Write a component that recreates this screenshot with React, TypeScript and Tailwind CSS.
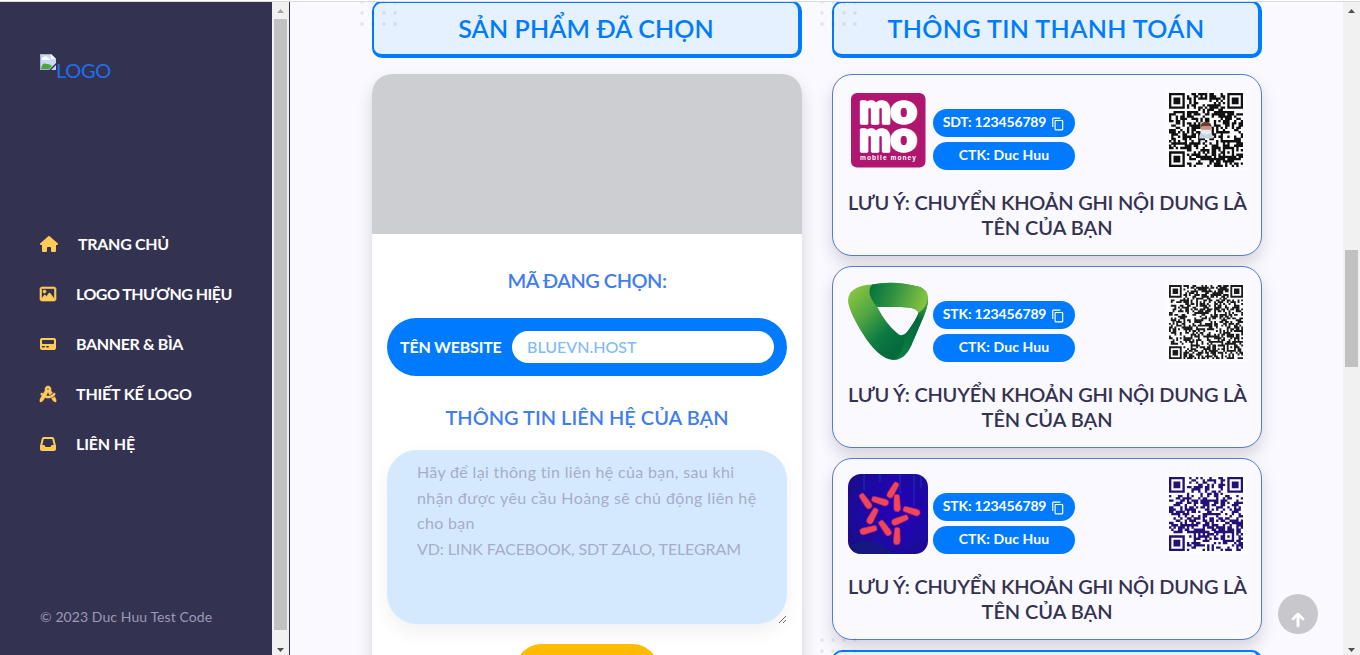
import React from "react";
import { FaHouse, FaRegImage, FaPager, FaCompassDrafting, FaInbox, FaArrowUp } from "react-icons/fa6";
import { MdContentCopy } from "react-icons/md";

function Scrollbar({ thumb, atTop }: { thumb: React.ReactNode; atTop?: boolean }) {
  return (
    <div className="flex h-full w-[17px] shrink-0 flex-col items-center bg-[#f1f1f1]">
      <div className="flex h-[17px] shrink-0 items-center">
        <svg width="7" height="4" viewBox="0 0 7 4" className={atTop ? "fill-[#a3a3a3]" : "fill-[#505050]"}>
          <path d="M3.5 0 7 4H0z" />
        </svg>
      </div>
      <div className="min-h-0 w-full flex-1">{thumb}</div>
      <div className="flex h-[9px] shrink-0 items-start pt-[2px]">
        <svg width="7" height="4" viewBox="0 0 7 4" className="fill-[#505050]">
          <path d="M0 0h7L3.5 4z" />
        </svg>
      </div>
    </div>
  );
}

function Qr({ n, seed, color, face }: { n: number; seed: number; color: string; face?: boolean }) {
  let s = seed;
  const rand = () => {
    s = (s * 1103515245 + 12345) % 2147483648;
    return s / 2147483648;
  };
  const finder = (x: number, y: number) => {
    const d = Math.max(Math.abs(x - 3), Math.abs(y - 3));
    return d === 3 || d <= 1;
  };
  let d = "";
  for (let y = 0; y < n; y++) {
    for (let x = 0; x < n; x++) {
      let on = rand() > 0.47;
      if (x < 8 && y < 8) on = x < 7 && y < 7 && finder(x, y);
      else if (x > n - 9 && y < 8) on = x > n - 8 && y < 7 && finder(x - n + 7, y);
      else if (x < 8 && y > n - 9) on = x < 7 && y > n - 8 && finder(x, y - n + 7);
      else {
        const a = Math.max(Math.abs(x - n + 7), Math.abs(y - n + 7));
        if (a <= 2) on = a !== 1;
        if (face && Math.abs(x - 16) < 3 && Math.abs(y - 16) < 4) on = false;
      }
      if (on) d += `M${x} ${y}h1.04v1.04h-1.04z`;
    }
  }
  return (
    <div className="size-20 shrink-0 bg-[#fdfdff] p-[3px]">
      <svg width="74" height="74" viewBox={`0 0 ${n} ${n}`}>
        <path d={d} fill={color} />
        {face && (
          <g>
            <path d="M13.500 19.500q0-2 3-2t3 2v.8h-6z" fill="#c4d5e4" />
            <circle cx="16.5" cy="15.8" r="2.2" fill="#c98f80" />
            <path d="M14 15.600q0-2.800 2.500-2.800t2.600 2.800l-.8-.9h-3.400z" fill="#6b3b34" />
            <path d="M14.600 16.400h3.800v1.500l-1.900.8-1.900-.8z" fill="#e2eaf2" />
          </g>
        )}
      </svg>
    </div>
  );
}

function MomoLogo() {
  return (
    <svg width="80" height="80" viewBox="0 0 80 80" className="shrink-0 overflow-visible">
      <rect x="3" y="3" width="74.5" height="74.5" rx="6" fill="#ae1670" />
      <g
        fill="#fff"
        stroke="#fff"
        strokeWidth="3.4"
        strokeLinejoin="round"
        fontFamily="Lato, sans-serif"
        fontWeight="900"
        fontSize="39"
      >
        <text x="11.5" y="32.500" textLength="31" lengthAdjust="spacingAndGlyphs">m</text>
        <text x="43" y="32.500" textLength="25.500" lengthAdjust="spacingAndGlyphs">o</text>
        <text x="11.5" y="60.500" textLength="31" lengthAdjust="spacingAndGlyphs">m</text>
        <text x="43" y="60.500" textLength="25.500" lengthAdjust="spacingAndGlyphs">o</text>
      </g>
      <text x="12" y="70" textLength="56" fill="#fff" fontFamily="Liberation Sans, sans-serif" fontWeight="700" fontSize="6.6">
        mobile money
      </text>
    </svg>
  );
}

function TriangleLogo() {
  return (
    <svg width="80" height="80" viewBox="0 0 80 80" className="shrink-0">
      <defs>
        <linearGradient id="leaf" gradientUnits="userSpaceOnUse" x1="2" y1="14" x2="52" y2="62">
          <stop offset="0" stopColor="#84c341" />
          <stop offset="0.35" stopColor="#4fa643" />
          <stop offset="0.72" stopColor="#0d7a42" />
          <stop offset="1" stopColor="#046b3c" />
        </linearGradient>
        <linearGradient id="band" gradientUnits="userSpaceOnUse" x1="22" y1="6" x2="76" y2="24">
          <stop offset="0" stopColor="#07733e" />
          <stop offset="0.4" stopColor="#2c8f41" />
          <stop offset="1" stopColor="#86c440" />
        </linearGradient>
        <linearGradient id="side" gradientUnits="userSpaceOnUse" x1="78" y1="22" x2="48" y2="76">
          <stop offset="0" stopColor="#3f9c43" />
          <stop offset="0.3" stopColor="#05683a" />
          <stop offset="1" stopColor="#0b8245" />
        </linearGradient>
      </defs>
      <path
        fillRule="evenodd"
        d="M24 2.500Q0 4 0 19Q1 29 13 49Q30 77 45 78Q56 78 63 64L78 28Q81 20 79 13Q76 5 70 4.500Q46-2 24 2.500ZM29.300 25H53Q69 25 70.500 31Q68 38 59 50Q54 56 49 51Q38 42 29.300 25Z"
        fill="url(#leaf)"
      />
      <path d="M70.500 31Q76 26 79.500 16Q81 21 76 34L63 64Q58 76 47 78Q56 70 57 53Q66 42 70.500 31Z" fill="url(#side)" />
      <path d="M24 2.500Q46-2 70 4.500Q80 7 80 16Q79 25 70.500 31Q69 25 53 25H29.300Q17 11 24 2.500Z" fill="url(#band)" />
    </svg>
  );
}

const strokes = [
  [45, 16, 120], [17.5, 27, 55], [32, 27, 17], [49, 29, 88], [63.5, 37, 17],
  [24.5, 42, 118], [52, 46, 158], [20.5, 56, 165], [37, 54, 55], [49, 62, 92],
];

function StarLogo() {
  return (
    <svg width="80" height="80" viewBox="0 0 80 80" className="shrink-0 rounded-[13px]">
      <defs>
        <radialGradient id="night" cx="0.6" cy="0.45" r="0.75">
          <stop offset="0" stopColor="#2600b8" />
          <stop offset="0.6" stopColor="#1d0aa4" />
          <stop offset="1" stopColor="#180d80" />
        </radialGradient>
      </defs>
      <rect width="80" height="80" fill="url(#night)" />
      <path d="M16 0v16M32 0v8M52 0v20M66 0v32M73 0v14" stroke="#294dc0" strokeWidth="1" opacity="0.6" />
      <path d="M0 73Q22 57 46 80H0Z" fill="#142078" opacity="0.55" />
      {strokes.map(([x, y, r]) => (
        <path
          key={`${x}-${y}`}
          d="M-8.500-1.500Q-8.500-2.600-6-2.800L5-3.400Q8.800-3.400 8.800 0T5 3.400L-6 2.800Q-8.500 2.600-8.500 1.500Z"
          transform={`translate(${x} ${y}) rotate(${r})`}
          fill="#f04758"
          stroke="#b91d68"
          strokeWidth="0.6"
        />
      ))}
    </svg>
  );
}

function Dots({ className }: { className: string }) {
  return (
    <svg width="40" height="28" viewBox="0 0 40 28" className={`pointer-events-none absolute ${className}`}>
      {[0, 1, 2].map((r) =>
        [0, 1, 2, 3].map((c) => (
          <circle key={`${r}-${c}`} cx={2 + c * 11} cy={2 + r * 11} r="1.8" fill="#343251" opacity="0.1" />
        ))
      )}
    </svg>
  );
}

function Heading({ children }: { children: React.ReactNode }) {
  return (
    <h2 className="flex h-[57px] shrink-0 items-center justify-center rounded-[10px] border-2 border-r-4 border-b-4 border-[#007bff] bg-[#e5f1fe] text-[25px] font-semibold text-[#007bff]">
      {children}
    </h2>
  );
}

function PayCard({ logo, label, qr }: { logo: React.ReactNode; label: string; qr: React.ReactNode }) {
  return (
    <section className="flex h-[182px] shrink-0 flex-col rounded-[20px] border border-[#5478d4] bg-[#faf9ff] p-[15px] shadow-[0_8px_16px_rgba(0,0,0,0.15)]">
      <div className="flex h-20">
        {logo}
        <div className="ml-[5px] flex w-[142px] flex-col gap-[5px] pt-[19px] text-sm font-bold text-white">
          <div className="flex h-7 shrink-0 items-center justify-center gap-[5px] rounded-full bg-[#007bff] pb-[2px]">
            <span className="tracking-[-0.15px] whitespace-nowrap">{label}: 123456789</span>
            <MdContentCopy className="mt-[3px] size-[14px]" />
          </div>
          <div className="flex h-7 shrink-0 items-center justify-center rounded-full bg-[#007bff] pb-[2px] tracking-[0.1px]">
            CTK: Duc Huu
          </div>
        </div>
        <div className="ml-auto">{qr}</div>
      </div>
      <p className="mt-5 text-center text-[20px] leading-[25px] font-semibold whitespace-nowrap text-[#343251]">
        <span className="tracking-[-0.22px]">LƯU Ý: CHUYỂN KHOẢN GHI NỘI DUNG LÀ</span>
        <br />
        <span className="tracking-[-0.05px]">TÊN CỦA BẠN</span>
      </p>
    </section>
  );
}

const nav = [
  { icon: <FaHouse className="h-4 w-[18px]" />, text: "TRANG CHỦ", track: "tracking-[-0.3px]" },
  { icon: <FaRegImage className="size-4 overflow-visible stroke-current [stroke-width:20]" />, text: "LOGO THƯƠNG HIỆU", track: "tracking-[-0.52px]" },
  { icon: <FaPager className="size-4" />, text: "BANNER & BÌA", track: "tracking-[-0.36px]" },
  { icon: <FaCompassDrafting className="size-4 overflow-visible stroke-current [stroke-width:20]" />, text: "THIẾT KẾ LOGO", track: "tracking-[-0.2px]" },
  { icon: <FaInbox className="size-4" />, text: "LIÊN HỆ", track: "tracking-[-0.15px]" },
];

function Sidebar() {
  return (
    <aside className="flex w-[272px] shrink-0 flex-col bg-[#343251] px-10">
      <a className="flex h-[167px] items-start pt-[52px] text-[20px] text-[#1e6ff0]">
        <svg width="16" height="16" viewBox="0 0 16 16" className="shrink-0">
          <path d="M0 0h11l5 5v4L9 16H0z" fill="#c8d8f6" />
          <path d="M11 0v5h5z" fill="#f6f8ff" />
          <path d="M2 5q0-2 2-2 2-2 4 1 2 0 2 2H2z" fill="#fff" />
          <path d="M1 15q1-7 6-5 3 0 5 2l-3 3z" fill="#4da63b" />
          <path d="M16 11v5h-5z" fill="#c7d2ea" />
          <path d="M.5 0v15.500M0 .5h11M0 15.500h9" stroke="#a7b3cb" strokeWidth="1" fill="none" />
        </svg>
        <span className="mt-px tracking-[-0.3px]">LOGO</span>
      </a>
      <nav className="mt-[50px] flex flex-col">
        {nav.map((n) => (
          <a key={n.text} className="flex h-[50px] items-center gap-5 text-base font-bold whitespace-nowrap text-white">
            <span className="shrink-0 text-[#ffcc57]">{n.icon}</span>
            <span className={n.track}>{n.text}</span>
          </a>
        ))}
      </nav>
      <p className="mt-auto mb-[28px] text-sm leading-5 text-[#9b9ab5]">
        <span className="tracking-[0.08px]">© 2023 Duc Huu Test Code</span>
      </p>
    </aside>
  );
}

export default function App() {
  return (
    <div className="flex h-[655px] w-[1360px] flex-col overflow-hidden bg-white pt-px font-[Lato,'Noto_Sans',sans-serif]">
      <div className="h-px shrink-0 bg-[#d9d9df]" />
      <div className="flex min-h-0 flex-1">
        <Sidebar />
        <Scrollbar atTop thumb={<div className="mx-auto h-[611px] w-[13px] bg-[#c1c1c1]" />} />
        <div className="w-px shrink-0 bg-[#343251]" />
        <main className="relative flex min-w-0 flex-1 gap-[30px] overflow-hidden bg-[#faf9ff] pl-[82px]">
          <div className="relative -mt-px flex w-[430px] shrink-0 flex-col gap-4">
            <Heading>
              <span className="tracking-[0.13px]">SẢN PHẨM ĐÃ CHỌN</span>
            </Heading>
            <Dots className="top-[-1px] left-[-12px]" />
            <section className="flex h-[640px] shrink-0 flex-col rounded-[20px] bg-white shadow-[0_8px_16px_rgba(0,0,0,0.15)]">
              <div className="h-[160px] shrink-0 rounded-t-[20px] bg-[#cdced2]" />
              <div className="flex flex-col items-center px-[15px]">
                <h3 className="mt-[33px] h-[26px] text-[20px] leading-[26px] font-semibold whitespace-nowrap text-[#3f7df0]">
                  <span className="tracking-[-0.5px]">MÃ ĐANG CHỌN:</span>
                </h3>
                <div className="mt-[25px] flex h-[58px] w-full items-center rounded-full bg-[#007bff] pr-[13px] pl-[13px]">
                  <label className="w-[112px] shrink-0 text-base font-bold whitespace-nowrap text-white">
                    <span className="tracking-[-0.2px]">TÊN WEBSITE</span>
                  </label>
                  <input
                    placeholder="BLUEVN.HOST"
                    className="h-8 min-w-0 flex-1 rounded-full bg-white px-[15px] pb-[2px] text-base font-medium tracking-[0px] outline-none placeholder:text-[#80bafa]"
                  />
                </div>
                <h3 className="mt-[28px] h-[26px] text-[20px] leading-[26px] font-semibold whitespace-nowrap text-[#3f7df0]">
                  <span className="tracking-[0px]">THÔNG TIN LIÊN HỆ CỦA BẠN</span>
                </h3>
                <div
                  role="textbox"
                  aria-multiline="true"
                  className="mt-5 h-[174px] w-full resize overflow-hidden rounded-[30px] bg-[#d5e9fe] py-[9px] pr-5 pl-[30px] text-base leading-[25.6px] whitespace-nowrap text-[#a6adc9] shadow-[0_8px_20px_rgba(0,0,0,0.06)]"
                >
                  <p className="tracking-[0.34px]">Hãy để lại thông tin liên hệ của bạn, sau khi</p>
                  <p className="tracking-[0.4px]">nhận được yêu cầu Hoàng sẽ chủ động liên hệ</p>
                  <p className="tracking-[0.3px]">cho bạn</p>
                  <p className="tracking-[-0.11px]">VD: LINK FACEBOOK, SDT ZALO, TELEGRAM</p>
                </div>
                <button className="mt-5 h-[50px] w-[142px] rounded-full bg-[#ffbc00]" aria-label="Gửi" />
              </div>
            </section>
          </div>
          <div className="relative -mt-px flex w-[430px] shrink-0 flex-col">
            <Heading>
              <span className="tracking-[0.4px]">THÔNG TIN THANH TOÁN</span>
            </Heading>
            <Dots className="top-[-1px] left-[-12px]" />
            <Dots className="top-[637px] left-[-12px]" />
            <div className="mt-4 flex flex-col gap-[10px]">
              <PayCard logo={<MomoLogo />} label="SDT" qr={<Qr n={33} seed={71} color="#111111" face />} />
              <PayCard logo={<TriangleLogo />} label="STK" qr={<Qr n={41} seed={1234} color="#1c1c1c" />} />
              <PayCard logo={<StarLogo />} label="STK" qr={<Qr n={33} seed={909} color="#241174" />} />
              <Heading>{null}</Heading>
            </div>
          </div>
          <button className="absolute top-[592px] left-[988px] flex size-10 items-center justify-center rounded-full bg-[#c8c8cc] pt-3 text-white">
            <FaArrowUp className="size-4 overflow-visible stroke-current [stroke-width:30]" />
          </button>
        </main>
        <Scrollbar thumb={<div className="mx-auto mt-[231px] h-[117px] w-[13px] bg-[#c1c1c1]" />} />
      </div>
    </div>
  );
}
